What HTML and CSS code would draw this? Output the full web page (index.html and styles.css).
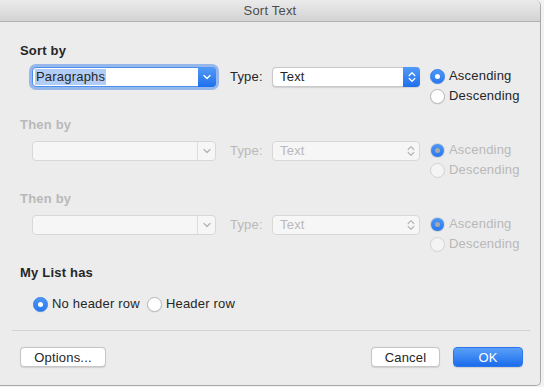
FILE: index.html
```html
<!DOCTYPE html>
<html lang="en">
<head>
    <meta charset="UTF-8">
    <meta name="viewport" content="width=device-width, initial-scale=1.0">
    <title>Sort Text</title>
    <link rel="stylesheet" href="styles.css">
</head>
<body>
    <div class="window">
        <div class="titlebar">Sort Text</div>

        <div class="main">
            <div class="group">
                <div class="group-title">Sort by</div>
                <div class="row">
                    <div class="select focused">
                        <span class="select-value"><span class="selected-text">Paragraphs</span></span>
                        <span class="select-arrow">
                            <svg width="8" height="6" viewBox="0 0 8 6"><path d="M1 1.5 L4 4.5 L7 1.5" fill="none" stroke="#fff" stroke-width="1.4" stroke-linecap="round" stroke-linejoin="round"/></svg>
                        </span>
                    </div>
                    <span class="type-label">Type:</span>
                    <div class="select type-select">
                        <span class="select-value">Text</span>
                        <span class="select-arrow">
                            <svg width="8" height="12" viewBox="0 0 8 12"><path d="M1.2 4.5 L4 1.7 L6.8 4.5 M1.2 7.5 L4 10.3 L6.8 7.5" fill="none" stroke="#fff" stroke-width="1.3" stroke-linecap="round" stroke-linejoin="round"/></svg>
                        </span>
                    </div>
                    <div class="radio-group">
                        <label class="radio-option"><span class="radio checked"></span>Ascending</label>
                        <label class="radio-option"><span class="radio"></span>Descending</label>
                    </div>
                </div>
            </div>

            <div class="group disabled">
                <div class="group-title">Then by</div>
                <div class="row">
                    <div class="select">
                        <span class="select-value"></span>
                        <span class="select-arrow">
                            <svg width="8" height="6" viewBox="0 0 8 6"><path d="M1 1.5 L4 4.5 L7 1.5" fill="none" stroke="#b4b4b4" stroke-width="1.3" stroke-linecap="round" stroke-linejoin="round"/></svg>
                        </span>
                    </div>
                    <span class="type-label">Type:</span>
                    <div class="select type-select">
                        <span class="select-value">Text</span>
                        <span class="select-arrow">
                            <svg width="8" height="12" viewBox="0 0 8 12"><path d="M1.2 4.5 L4 1.7 L6.8 4.5 M1.2 7.5 L4 10.3 L6.8 7.5" fill="none" stroke="#b4b4b4" stroke-width="1.2" stroke-linecap="round" stroke-linejoin="round"/></svg>
                        </span>
                    </div>
                    <div class="radio-group">
                        <label class="radio-option"><span class="radio checked"></span>Ascending</label>
                        <label class="radio-option"><span class="radio"></span>Descending</label>
                    </div>
                </div>
            </div>

            <div class="group disabled">
                <div class="group-title">Then by</div>
                <div class="row">
                    <div class="select">
                        <span class="select-value"></span>
                        <span class="select-arrow">
                            <svg width="8" height="6" viewBox="0 0 8 6"><path d="M1 1.5 L4 4.5 L7 1.5" fill="none" stroke="#b4b4b4" stroke-width="1.3" stroke-linecap="round" stroke-linejoin="round"/></svg>
                        </span>
                    </div>
                    <span class="type-label">Type:</span>
                    <div class="select type-select">
                        <span class="select-value">Text</span>
                        <span class="select-arrow">
                            <svg width="8" height="12" viewBox="0 0 8 12"><path d="M1.2 4.5 L4 1.7 L6.8 4.5 M1.2 7.5 L4 10.3 L6.8 7.5" fill="none" stroke="#b4b4b4" stroke-width="1.2" stroke-linecap="round" stroke-linejoin="round"/></svg>
                        </span>
                    </div>
                    <div class="radio-group">
                        <label class="radio-option"><span class="radio checked"></span>Ascending</label>
                        <label class="radio-option"><span class="radio"></span>Descending</label>
                    </div>
                </div>
            </div>

            <div class="group last">
                <div class="group-title">My List has</div>
                <div class="header-row">
                    <label class="radio-option"><span class="radio checked"></span>No header row</label>
                    <label class="radio-option"><span class="radio"></span>Header row</label>
                </div>
            </div>
        </div>

        <div class="separator"></div>

        <div class="footer">
            <button class="button options">Options...</button>
            <div class="spacer"></div>
            <button class="button cancel">Cancel</button>
            <button class="button primary">OK</button>
        </div>
    </div>
</body>
</html>
```

FILE: styles.css
```css
body {
    margin: 0;
    background-color: #f2f2f2;
    font-family: 'Liberation Sans', Arial, sans-serif;
    font-size: 13px;
    letter-spacing: 0.2px;
    color: #262626;
}
.window {
    width: 540px;
    height: 385px;
    background-color: #ececec;
    border-right: 1px solid #a9a9a9;
    border-bottom: 1px solid #a9a9a9;
    border-radius: 0 6px 5px 0;
    overflow: hidden;
}
.titlebar {
    height: 21px;
    line-height: 22px;
    text-align: center;
    color: #4d4d4d;
    background: linear-gradient(#ebebeb, #d3d3d3);
    border-bottom: 1px solid #b2b2b2;
}
.main {
    padding: 21px 20px 0 20px;
}
.group {
    margin-bottom: 11px;
}
.group-title {
    font-weight: bold;
    line-height: 16px;
    margin-bottom: 8px;
}
.row {
    display: flex;
    align-items: flex-start;
    padding-left: 12px;
}
.select {
    display: flex;
    width: 182px;
    height: 18px;
    background-color: #fff;
    border: 1px solid #c9c9c9;
    border-radius: 4px;
    box-shadow: 0 0.5px 1px rgba(0, 0, 0, 0.12);
}
.select-value {
    flex: 1;
    line-height: 18px;
    padding-left: 2px;
}
.selected-text {
    background-color: #b1cdf6;
    padding: 0 1px 1px 1px;
}
.select-arrow {
    width: 17px;
    display: flex;
    align-items: center;
    justify-content: center;
    border-left: 1px solid #dcdcdc;
}
.focused {
    border-color: #4b8ff0;
    box-shadow: 0 0 0 3px rgba(80, 140, 235, 0.55);
}
.focused .select-arrow,
.type-select .select-arrow {
    background: linear-gradient(#539bf8, #1e6fec);
    border-left: none;
    margin: -1px -1px -1px 0;
    border-radius: 0 4px 4px 0;
}
.focused .select-arrow {
    width: 18px;
}
.type-label {
    width: 42px;
    margin-left: 14px;
    line-height: 20px;
}
.type-select {
    width: 146px;
}
.type-select .select-value {
    padding-left: 7px;
}
.type-select .select-arrow {
    width: 17px;
}
.radio-group {
    margin-left: 10px;
    margin-top: -1px;
}
.radio-option {
    display: flex;
    align-items: center;
    line-height: 20px;
    height: 20px;
}
.radio {
    box-sizing: border-box;
    width: 15px;
    height: 15px;
    margin-right: 4px;
    border-radius: 50%;
    background-color: #fff;
    border: 1px solid #b7b7b7;
    box-shadow: 0 0.5px 1px rgba(0, 0, 0, 0.1);
    display: flex;
    align-items: center;
    justify-content: center;
}
.radio.checked {
    background: linear-gradient(#4d97f8, #2a78ef);
    border-color: #2f7cee;
}
.radio.checked::after {
    content: '';
    width: 5px;
    height: 5px;
    border-radius: 50%;
    background-color: #fff;
}

/* gruppi disabilitati */
.disabled {
    color: #b9b9b9;
}
.disabled .select {
    background-color: #f6f6f6;
    border-color: #d8d8d8;
    box-shadow: none;
}
.disabled .type-select .select-arrow {
    background: none;
    border-left: none;
    margin: 0;
}
.disabled .radio {
    background-color: #f4f4f4;
    border-color: #d2d2d2;
    box-shadow: none;
}
.disabled .radio.checked::after {
    background-color: #a9a9a9;
}
.last {
    margin-bottom: 0;
}
.header-row {
    display: flex;
    margin-top: 13px;
    padding-left: 13px;
    gap: 7px;
}
.separator {
    height: 1px;
    background-color: #d2d2d2;
    margin: 16px 10px 0 12px;
}
.footer {
    display: flex;
    padding: 16px 17px 0 20px;
}
.spacer {
    flex: 1;
}
.button {
    height: 20px;
    padding: 0;
    font-family: inherit;
    font-size: 13px;
    letter-spacing: 0.2px;
    color: #262626;
    background-color: #fff;
    border: 1px solid #c6c6c6;
    border-radius: 4px;
    box-shadow: 0 0.5px 1px rgba(0, 0, 0, 0.12);
}
.options {
    width: 86px;
}
.cancel {
    width: 69px;
    margin-right: 13px;
}
.primary {
    width: 70px;
    color: #fff;
    border-color: #2a76ee;
    background: linear-gradient(#5aa0f8, #1b6cec);
}
```
